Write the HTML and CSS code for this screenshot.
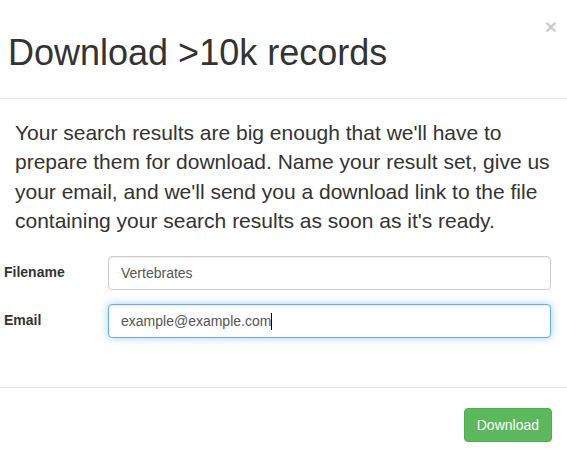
FILE: index.html
```html
<!DOCTYPE html>
<html lang="en">
<head>
<meta charset="utf-8">
<title>Download >10k records</title>
<link rel="stylesheet" href="styles.css">
</head>
<body>
<div class="modal">
  <div class="modal-header">
    <h1 class="modal-title">Download &gt;10k records</h1>
    <button type="button" class="close" aria-label="Close">&times;</button>
  </div>
  <div class="modal-body">
    <p class="lead">Your search results are big enough that we'll have to prepare them for download. Name your result set, give us your email, and we'll send you a download link to the file containing your search results as soon as it's ready.</p>
    <form class="form">
      <div class="form-row">
        <label class="form-label" for="filename">Filename</label>
        <input class="form-control" id="filename" type="text" value="Vertebrates">
      </div>
      <div class="form-row">
        <label class="form-label">Email</label>
        <div class="form-control focused">example@example.com<span class="caret"></span></div>
      </div>
    </form>
  </div>
  <div class="modal-footer">
    <button type="button" class="btn btn-success">Download</button>
  </div>
</div>
</body>
</html>
```

FILE: styles.css
```css
* { box-sizing: border-box; }
html, body {
  margin: 0;
  padding: 0;
  background: #fff;
}
body {
  font-family: "Liberation Sans", Arial, Helvetica, sans-serif;
  font-size: 14px;
  line-height: 1.42857;
  color: #333;
  width: 567px;
  height: 450px;
  overflow: hidden;
}
.modal {
  display: flex;
  flex-direction: column;
}
.modal-header {
  display: flex;
  justify-content: space-between;
  align-items: flex-start;
  padding: 33px 10px 25px 8px;
  border-bottom: 1px solid #e5e5e5;
}
.modal-title {
  margin: 0;
  font-size: 36px;
  font-weight: 400;
  line-height: 40px;
  color: #333;
}
.close {
  margin-top: -17px;
  padding: 0;
  border: 0;
  background: transparent;
  font-family: "Liberation Sans", Arial, sans-serif;
  font-size: 21px;
  font-weight: 700;
  line-height: 1;
  color: #000;
  opacity: .2;
  cursor: pointer;
}
.modal-body {
  padding: 19px 16px 49px 15px;
}
.lead {
  margin: 0 0 20px;
  font-size: 21px;
  font-weight: 300;
  line-height: 1.4;
}
.form {
  display: flex;
  flex-direction: column;
  gap: 14px;
  margin-left: -11px;
}
.form-row {
  display: grid;
  grid-template-columns: 104px 1fr;
  align-items: center;
}
.form-label {
  font-weight: 700;
  font-size: 14px;
}
.form-control {
  display: block;
  width: 100%;
  height: 34px;
  padding: 6px 12px;
  font-family: inherit;
  font-size: 14px;
  line-height: 20px;
  color: #555;
  background: #fff;
  border: 1px solid #ccc;
  border-radius: 4px;
  box-shadow: inset 0 1px 1px rgba(0,0,0,.075);
  outline: none;
}
.form-control.focused {
  border-color: #66afe9;
  box-shadow: inset 0 1px 1px rgba(0,0,0,.075), 0 0 8px rgba(102,175,233,.6);
}
.caret {
  display: inline-block;
  width: 1px;
  height: 17px;
  background: #000;
  vertical-align: -4px;
}
.modal-footer {
  display: flex;
  justify-content: flex-end;
  padding: 20px 15px 20px;
  border-top: 1px solid #e5e5e5;
}
.btn {
  display: inline-block;
  padding: 6px 12px;
  font-family: inherit;
  font-size: 14px;
  line-height: 20px;
  border: 1px solid transparent;
  border-radius: 4px;
  cursor: pointer;
}
.btn-success {
  color: #fff;
  background: #5cb85c;
  border-color: #4cae4c;
}
```
